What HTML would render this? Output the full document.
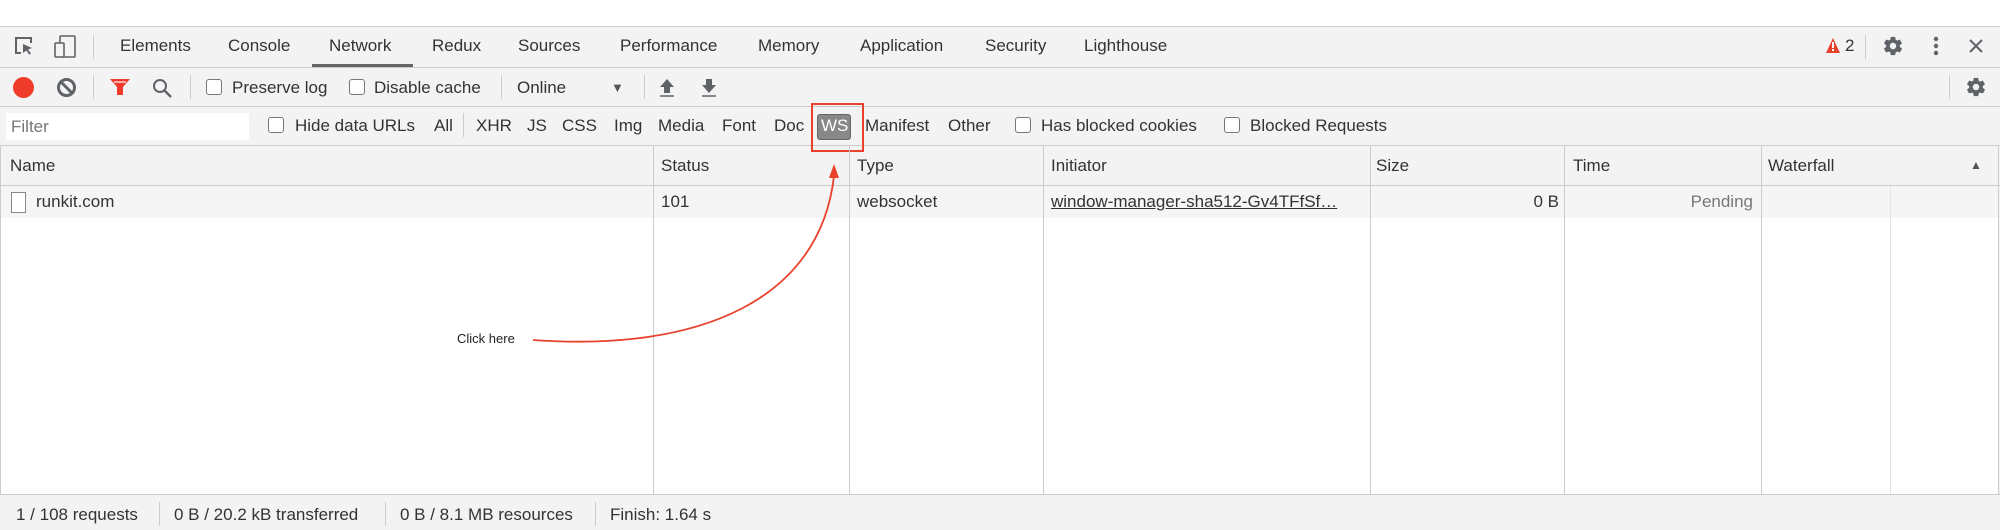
<!DOCTYPE html>
<html><head><meta charset="utf-8"><style>
*{margin:0;padding:0;box-sizing:border-box}
body{width:2000px;height:530px;overflow:hidden;background:#fff;font-family:"Liberation Sans",Arial,sans-serif;color:#333;position:relative}
.a{position:absolute;white-space:nowrap}
.t{font-size:17px;top:36px}
.f{font-size:17px}
.hl{position:absolute;left:0;width:2000px;height:1px;background:#cbcbcb}
.vl{position:absolute;width:1px;background:#ccc}
.cb{position:absolute;width:16px;height:16px;border:1px solid #777;border-radius:3px;background:#fff}
</style></head><body>
<div class="a" style="left:0;top:27px;width:2000px;height:468px;background:#f3f3f3"></div>
<div class="hl" style="top:26px;background:#d0d0d0"></div>
<div class="hl" style="top:67px"></div>
<div class="hl" style="top:106px"></div>
<div class="hl" style="top:145px"></div>
<div class="hl" style="top:185px"></div>
<!-- tab bar icons -->
<svg class="a" style="left:13px;top:35px" width="22" height="22" viewBox="0 0 22 22"><path d="M8 18H3V3h15v5" fill="none" stroke="#5f6368" stroke-width="2"/><path d="M10 9l9 4-4 1.5 3 4-2 1-2.5-4L10 18z" fill="#5f6368"/></svg>
<svg class="a" style="left:53px;top:34px" width="24" height="24" viewBox="0 0 24 24"><rect x="7" y="2" width="15" height="21" rx="1" fill="none" stroke="#5f6368" stroke-width="1.6"/><rect x="2" y="9" width="9" height="14" rx="1" fill="#f3f3f3" stroke="#5f6368" stroke-width="1.6"/></svg>
<div class="vl" style="left:93px;top:35px;height:24px"></div>
<div class="a t" style="left:120px">Elements</div>
<div class="a t" style="left:228px">Console</div>
<div class="a t" style="left:329px">Network</div>
<div class="a" style="left:312px;top:64px;width:101px;height:3px;background:#666"></div>
<div class="a t" style="left:432px">Redux</div>
<div class="a t" style="left:518px">Sources</div>
<div class="a t" style="left:620px">Performance</div>
<div class="a t" style="left:758px">Memory</div>
<div class="a t" style="left:860px">Application</div>
<div class="a t" style="left:985px">Security</div>
<div class="a t" style="left:1084px">Lighthouse</div>
<svg class="a" style="left:1825px;top:37px" width="16" height="17" viewBox="0 0 16 17"><path d="M8 1L15 16H1z" fill="#e8412c"/><rect x="7" y="5" width="2" height="6" fill="#fff"/><rect x="7" y="12" width="2" height="2" fill="#fff"/></svg>
<div class="a t" style="left:1845px;top:36px">2</div>
<div class="vl" style="left:1865px;top:35px;height:24px"></div>
<svg class="a" style="left:1882px;top:35px" width="22" height="22" viewBox="0 0 24 24"><path fill="#5f6368" d="M19.4 13c.04-.3.06-.6.06-1s-.02-.7-.06-1l2.1-1.6c.2-.15.25-.42.12-.64l-2-3.46c-.12-.22-.39-.3-.61-.22l-2.5 1c-.52-.4-1.08-.73-1.69-.98l-.38-2.65A.49.49 0 0 0 14 2h-4c-.25 0-.46.18-.49.42l-.38 2.65c-.61.25-1.17.59-1.69.98l-2.49-1c-.23-.09-.49 0-.61.22l-2 3.46c-.13.22-.07.49.12.64L4.57 11c-.04.32-.07.65-.07 1s.03.68.07 1l-2.11 1.65c-.19.15-.24.42-.12.64l2 3.46c.12.22.39.3.61.22l2.49-1c.52.4 1.08.73 1.69.98l.38 2.65c.03.24.24.42.49.42h4c.25 0 .46-.18.49-.42l.38-2.65c.61-.25 1.17-.59 1.69-.98l2.49 1c.23.09.49 0 .61-.22l2-3.46c.12-.22.07-.49-.12-.64L19.4 13zM12 15.5A3.5 3.5 0 1 1 12 8.5a3.5 3.5 0 0 1 0 7z"/></svg>
<svg class="a" style="left:1930px;top:35px" width="12" height="22" viewBox="0 0 12 22"><circle cx="6" cy="4" r="2.2" fill="#5f6368"/><circle cx="6" cy="11" r="2.2" fill="#5f6368"/><circle cx="6" cy="18" r="2.2" fill="#5f6368"/></svg>
<svg class="a" style="left:1968px;top:38px" width="16" height="16" viewBox="0 0 16 16"><path d="M2 2L14 14M14 2L2 14" stroke="#5f6368" stroke-width="2"/></svg>
<!-- toolbar -->
<div class="a" style="left:13px;top:77px;width:21px;height:21px;border-radius:50%;background:#f03c2a"></div>
<svg class="a" style="left:56px;top:77px" width="21" height="21" viewBox="0 0 21 21"><circle cx="10.5" cy="10.5" r="8" fill="none" stroke="#5f6368" stroke-width="3"/><path d="M5 5l11 11" stroke="#5f6368" stroke-width="3"/></svg>
<div class="vl" style="left:93px;top:75px;height:24px"></div>
<svg class="a" style="left:109px;top:78px" width="22" height="19" viewBox="0 0 22 19"><path d="M1 1h20l-7 8v8h-6V9z" fill="#f03c2a"/><path d="M5 4h12" stroke="#fff" stroke-width="1.2"/></svg>
<svg class="a" style="left:151px;top:77px" width="22" height="22" viewBox="0 0 22 22"><circle cx="9" cy="9" r="6" fill="none" stroke="#5f6368" stroke-width="2"/><path d="M13.5 13.5L20 20" stroke="#5f6368" stroke-width="2.4"/></svg>
<div class="vl" style="left:190px;top:75px;height:24px"></div>
<div class="cb" style="left:206px;top:79px"></div>
<div class="a f" style="left:232px;top:78px">Preserve log</div>
<div class="cb" style="left:349px;top:79px"></div>
<div class="a f" style="left:374px;top:78px">Disable cache</div>
<div class="vl" style="left:501px;top:75px;height:24px"></div>
<div class="a f" style="left:517px;top:78px">Online</div>
<div class="a" style="left:611px;top:80px;font-size:13px;color:#555">▼</div>
<div class="vl" style="left:644px;top:75px;height:24px"></div>
<svg class="a" style="left:659px;top:77px" width="16" height="20" viewBox="0 0 16 20"><path d="M8 2l7 8h-4v6H5v-6H1z" fill="#5f6368"/><path d="M1 19h14" stroke="#5f6368" stroke-width="1.5"/></svg>
<svg class="a" style="left:701px;top:77px" width="16" height="20" viewBox="0 0 16 20"><path d="M8 16l7-8h-4V2H5v6H1z" fill="#5f6368"/><path d="M1 19h14" stroke="#5f6368" stroke-width="1.5"/></svg>
<div class="vl" style="left:1949px;top:75px;height:24px"></div>
<svg class="a" style="left:1965px;top:76px" width="22" height="22" viewBox="0 0 24 24"><path fill="#5f6368" d="M19.4 13c.04-.3.06-.6.06-1s-.02-.7-.06-1l2.1-1.6c.2-.15.25-.42.12-.64l-2-3.46c-.12-.22-.39-.3-.61-.22l-2.5 1c-.52-.4-1.08-.73-1.69-.98l-.38-2.65A.49.49 0 0 0 14 2h-4c-.25 0-.46.18-.49.42l-.38 2.65c-.61.25-1.17.59-1.690.98l-2.49-1c-.23-.09-.49 0-.61.22l-2 3.46c-.13.22-.07.49.12.64L4.57 11c-.04.32-.07.65-.07 1s.03.68.07 1l-2.11 1.65c-.19.15-.24.42-.12.64l2 3.46c.12.22.39.3.61.22l2.49-1c.52.4 1.08.73 1.69.98l.38 2.650c.03.24.24.42.49.42h4c.25 0 .46-.18.49-.42l.38-2.65c.61-.25 1.17-.59 1.69-.98l2.49 1c.23.09.49 0 .61-.22l2-3.46c.12-.22.07-.49-.12-.64L19.4 13zM12 15.5A3.5 3.5 0 1 1 12 8.5a3.5 3.5 0 0 1 0 7z"/></svg>
<!-- filter row -->
<div class="a" style="left:6px;top:113px;width:243px;height:27px;background:#fff"></div>
<div class="a f" style="left:11px;top:117px;color:#777">Filter</div>
<div class="cb" style="left:268px;top:117px"></div>
<div class="a f" style="left:295px;top:116px">Hide data URLs</div>
<div class="a f" style="left:434px;top:116px">All</div>
<div class="vl" style="left:463px;top:113px;height:24px"></div>
<div class="a f" style="left:476px;top:116px">XHR</div>
<div class="a f" style="left:527px;top:116px">JS</div>
<div class="a f" style="left:562px;top:116px">CSS</div>
<div class="a f" style="left:614px;top:116px">Img</div>
<div class="a f" style="left:658px;top:116px">Media</div>
<div class="a f" style="left:722px;top:116px">Font</div>
<div class="a f" style="left:774px;top:116px">Doc</div>
<div class="a" style="left:817px;top:114px;width:34px;height:26px;background:#888;border-radius:3px;border:1px solid #666"></div>
<div class="a f" style="left:821px;top:116px;color:#fff">WS</div>
<div class="a" style="left:811px;top:103px;width:53px;height:49px;border:2px solid #e8412c"></div>
<div class="a f" style="left:865px;top:116px">Manifest</div>
<div class="a f" style="left:948px;top:116px">Other</div>
<div class="cb" style="left:1015px;top:117px"></div>
<div class="a f" style="left:1041px;top:116px">Has blocked cookies</div>
<div class="cb" style="left:1224px;top:117px"></div>
<div class="a f" style="left:1250px;top:116px">Blocked Requests</div>
<!-- table -->
<div class="a" style="left:1px;top:218px;width:1997px;height:277px;background:#fff"></div>
<div class="a" style="left:1px;top:186px;width:1997px;height:32px;background:#f5f5f5"></div>
<div class="vl" style="left:0;top:146px;height:349px"></div>
<div class="vl" style="left:1998px;top:146px;height:349px"></div>
<div class="vl" style="left:653px;top:146px;height:349px"></div>
<div class="vl" style="left:849px;top:146px;height:349px"></div>
<div class="vl" style="left:1043px;top:146px;height:349px"></div>
<div class="vl" style="left:1370px;top:146px;height:349px"></div>
<div class="vl" style="left:1564px;top:146px;height:349px"></div>
<div class="vl" style="left:1761px;top:146px;height:349px"></div>
<div class="vl" style="left:1890px;top:186px;height:309px;background:#e4e4e4"></div>
<div class="a f" style="left:10px;top:156px">Name</div>
<div class="a f" style="left:661px;top:156px">Status</div>
<div class="a f" style="left:857px;top:156px">Type</div>
<div class="a f" style="left:1051px;top:156px">Initiator</div>
<div class="a f" style="left:1376px;top:156px">Size</div>
<div class="a f" style="left:1573px;top:156px">Time</div>
<div class="a f" style="left:1768px;top:156px">Waterfall</div>
<div class="a" style="left:1970px;top:158px;font-size:12px;color:#555">▲</div>
<div class="a" style="left:11px;top:192px;width:15px;height:21px;border:1px solid #888;background:#fff"></div>
<div class="a f" style="left:36px;top:192px">runkit.com</div>
<div class="a f" style="left:661px;top:192px">101</div>
<div class="a f" style="left:857px;top:192px">websocket</div>
<div class="a f" style="left:1051px;top:192px;text-decoration:underline">window-manager-sha512-Gv4TFfSf…</div>
<div class="a f" style="left:1500px;top:192px;width:59px;text-align:right">0 B</div>
<div class="a f" style="left:1640px;top:192px;width:113px;text-align:right;color:#777">Pending</div>
<!-- annotation -->
<div class="a" style="left:457px;top:331px;font-size:13px;color:#222">Click here</div>
<svg class="a" style="left:0;top:0" width="2000" height="530"><path d="M533 340 C 700 352, 820 300, 834 176" fill="none" stroke="#e8412c" stroke-width="1.8"/><path d="M834 164 L829 178 L839 178 Z" fill="#e8412c"/></svg>
<!-- status bar -->
<div class="hl" style="top:494px"></div>
<div class="a" style="left:0;top:495px;width:2000px;height:35px;background:#f3f3f3"></div>
<div class="a f" style="left:16px;top:505px">1 / 108 requests</div>
<div class="vl" style="left:159px;top:502px;height:24px"></div>
<div class="a f" style="left:174px;top:505px">0 B / 20.2 kB transferred</div>
<div class="vl" style="left:385px;top:502px;height:24px"></div>
<div class="a f" style="left:400px;top:505px">0 B / 8.1 MB resources</div>
<div class="vl" style="left:595px;top:502px;height:24px"></div>
<div class="a f" style="left:610px;top:505px">Finish: 1.64 s</div>
</body></html>
